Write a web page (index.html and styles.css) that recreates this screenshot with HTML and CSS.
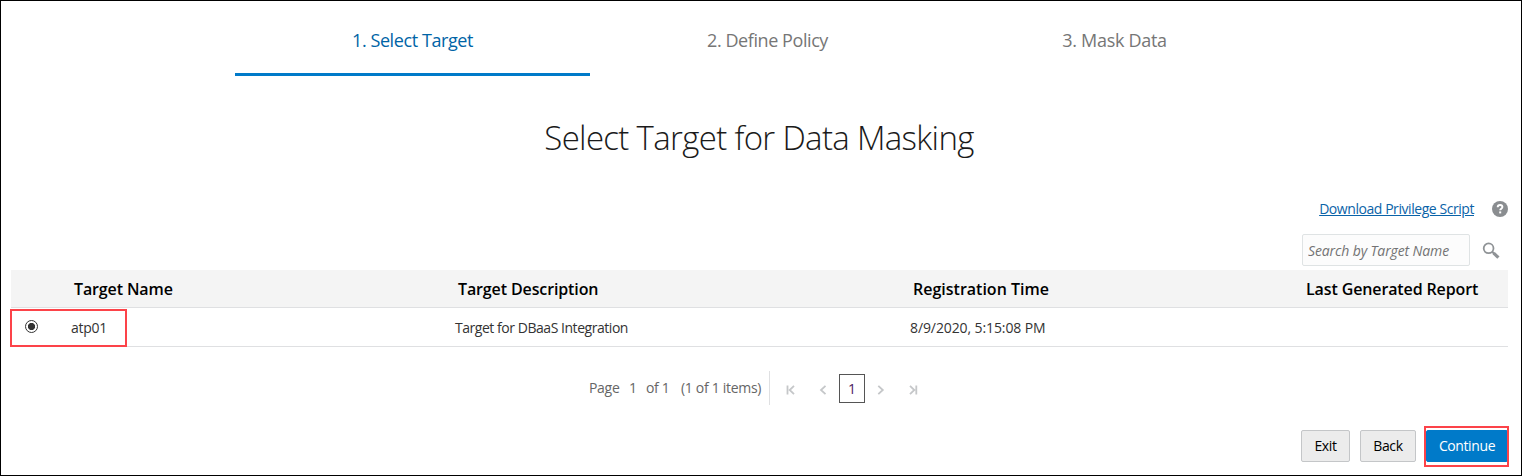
FILE: index.html
```html
<!DOCTYPE html>
<html lang="en">
<head>
<meta charset="utf-8">
<title>Data Masking</title>
<link rel="stylesheet" href="styles.css">
</head>
<body>
<main class="wizard">
  <nav class="steps">
    <a class="step step-active">1. Select Target</a>
    <a class="step step-define">2. Define Policy</a>
    <a class="step step-mask">3. Mask Data</a>
  </nav>
  <h1 class="title">Select Target for Data Masking</h1>
  <div class="script-row">
    <a class="script-link">Download Privilege Script</a>
    <svg class="help" viewBox="0 0 16 16" width="16" height="16"><circle cx="8" cy="8" r="8" fill="#8a8d90"/><path d="M5.7 6.3C5.7 4.8 6.7 4 8.1 4s2.3.8 2.3 2c0 1.7-2.2 1.7-2.2 3.2" fill="none" stroke="#fff" stroke-width="1.9"/><rect x="7.2" y="10.4" width="2" height="2" fill="#fff"/></svg>
  </div>
  <div class="search-row">
    <input class="search" type="text" placeholder="Search by Target Name">
    <svg class="lens" viewBox="0 0 18 18" width="18" height="18" fill="none" stroke="#8f9396"><circle cx="6.6" cy="6.3" r="4.9" stroke-width="1.8"/><path d="M10.2 9.8l2 2" stroke-width="2"/><path d="M11.7 11.2l4.7 4.5" stroke-width="3.2"/></svg>
  </div>
  <section class="table">
    <div class="row head">
      <span></span>
      <span class="t-name">Target Name</span>
      <span class="t-desc">Target Description</span>
      <span class="t-time">Registration Time</span>
      <span class="t-report">Last Generated Report</span>
    </div>
    <div class="row data">
      <span class="radio"></span>
      <span class="d-name">atp01</span>
      <span class="d-desc">Target for DBaaS Integration</span>
      <span class="d-time">8/9/2020, 5:15:08 PM</span>
      <span></span>
      <i class="highlight highlight-row"></i>
    </div>
  </section>
  <div class="pager">
    <div class="pager-text"><span class="p-page">Page</span><span class="p-num">1</span><span class="p-of">of 1</span><span class="p-items">(1 of 1 items)</span></div>
    <div class="pager-nav">
      <svg class="arrow first" viewBox="0 0 10 10" width="10" height="10"><path d="M1.5.5v9M8 .8L3.7 5 8 9.2"/></svg>
      <svg class="arrow prev" viewBox="0 0 10 10" width="10" height="10"><path d="M7.5.8L3 5l4.5 4.2"/></svg>
      <span class="current">1</span>
      <svg class="arrow next" viewBox="0 0 10 10" width="10" height="10"><path d="M2.3.8L6.8 5 2.3 9.2"/></svg>
      <svg class="arrow last" viewBox="0 0 10 10" width="10" height="10"><path d="M8.3.5v9M2 .8L6.3 5 2 9.2"/></svg>
    </div>
  </div>
  <footer class="actions">
    <button class="btn exit">Exit</button>
    <button class="btn back">Back</button>
    <span class="primary-wrap"><button class="btn primary">Continue</button><i class="highlight highlight-continue"></i></span>
  </footer>
</main>
</body>
</html>
```

FILE: styles.css
```css
* { box-sizing: border-box; }
body { margin: 0; background: #fff; font-family: "Open Sans", "Noto Sans", sans-serif; font-size: 14px; color: #333; }
.wizard { width: 1522px; height: 476px; border: 1px solid #000; padding: 0 13px 0 10px; overflow: hidden; display: flex; flex-direction: column; }
.wizard span, .wizard a, .title { white-space: nowrap; }

.steps { display: flex; height: 75px; margin-left: 224px; }
.step { width: 355px; padding-top: 27px; text-align: center; font-size: 18px; line-height: 25px; letter-spacing: -0.42px; color: #767676; }
.step-active { color: #0064a6; border-bottom: 3px solid #007ac9; }
.step-mask { width: 339px; letter-spacing: -0.3px; }

.title { margin: 36px 0 0 -1px; height: 52px; line-height: 52px; text-align: center; font-size: 33px; font-weight: 300; letter-spacing: -0.67px; color: #1a1a1a; }

.script-row { display: flex; justify-content: flex-end; align-items: center; gap: 18px; height: 22px; margin-top: 34px; }
.script-link { line-height: 20px; letter-spacing: -0.44px; color: #0a63a8; text-decoration: underline; }

.search-row { display: flex; justify-content: flex-end; align-items: center; height: 32px; margin: 14px 8px 4px 0; gap: 13px; }
.lens { margin-top: 1px; }
.search { width: 168px; height: 32px; margin-right: -1px; border: 1px solid #dfe3e4; border-radius: 2px; background: #fcfcfc; padding: 1px 5px; font: italic 14px "Open Sans", sans-serif; letter-spacing: -0.12px; }
.search::placeholder { color: #737373; opacity: 1; }

.table { width: 1497px; }
.row { display: grid; grid-template-columns: 60px 384px 455px 393px 1fr; align-items: center; position: relative; border-bottom: 1px solid #dfe0e2; }
.head { height: 38px; background: #f4f4f4; font-size: 16px; font-weight: 600; letter-spacing: -0.12px; color: #000; }
.head span { padding-left: 3px; }
.head .t-time { letter-spacing: 0; }
.data { height: 39px; }
.d-name { letter-spacing: -0.3px; }
.d-desc { letter-spacing: -0.46px; }
.d-time { letter-spacing: -0.1px; }
.radio { width: 13px; height: 13px; margin: -2px 0 0 14px; border: 1px solid #333; border-radius: 50%; background: radial-gradient(circle, #333 3.2px, #fff 4px); }
.highlight { position: absolute; border: 2px solid #fc4349; pointer-events: none; }
.highlight-row { left: -1px; top: 1px; width: 117px; height: 38px; }

.pager { display: flex; margin: 24px 0 0 578px; height: 34px; color: #666; }
.pager-text { display: flex; width: 181px; border-right: 1px solid #dfe0e2; line-height: 34px; letter-spacing: -0.3px; }
.p-page { width: 40px; }
.p-num { width: 17px; }
.p-of { width: 35px; }
.pager-nav { display: flex; align-items: center; padding-top: 1px; }
.arrow { fill: none; stroke: #c5c7c9; stroke-width: 1.8; margin-top: 3px; }
.first { margin-left: 16px; }
.prev { margin-left: 22px; }
.current { width: 26px; height: 29px; margin-left: 11px; border: 1px solid #555; line-height: 27px; text-align: center; color: #4a1a5e; }
.next { margin-left: 11px; }
.last { margin-left: 22px; }

.actions { display: flex; justify-content: flex-end; gap: 10px; margin-top: 25px; }
.btn { height: 32px; padding: 0 0 2px; border: 1px solid #c4c6c8; border-radius: 2px; background: #ececec; font: 14px "Open Sans", sans-serif; letter-spacing: -0.4px; color: #000; }
.exit { width: 49px; }
.back { width: 56px; }
.primary-wrap { position: relative; width: 82px; }
.primary { width: 82px; border-color: #007ac9; background: #007ac9; color: #fff; }
.highlight-continue { left: -2px; top: -4px; width: 85px; height: 41px; }
```
